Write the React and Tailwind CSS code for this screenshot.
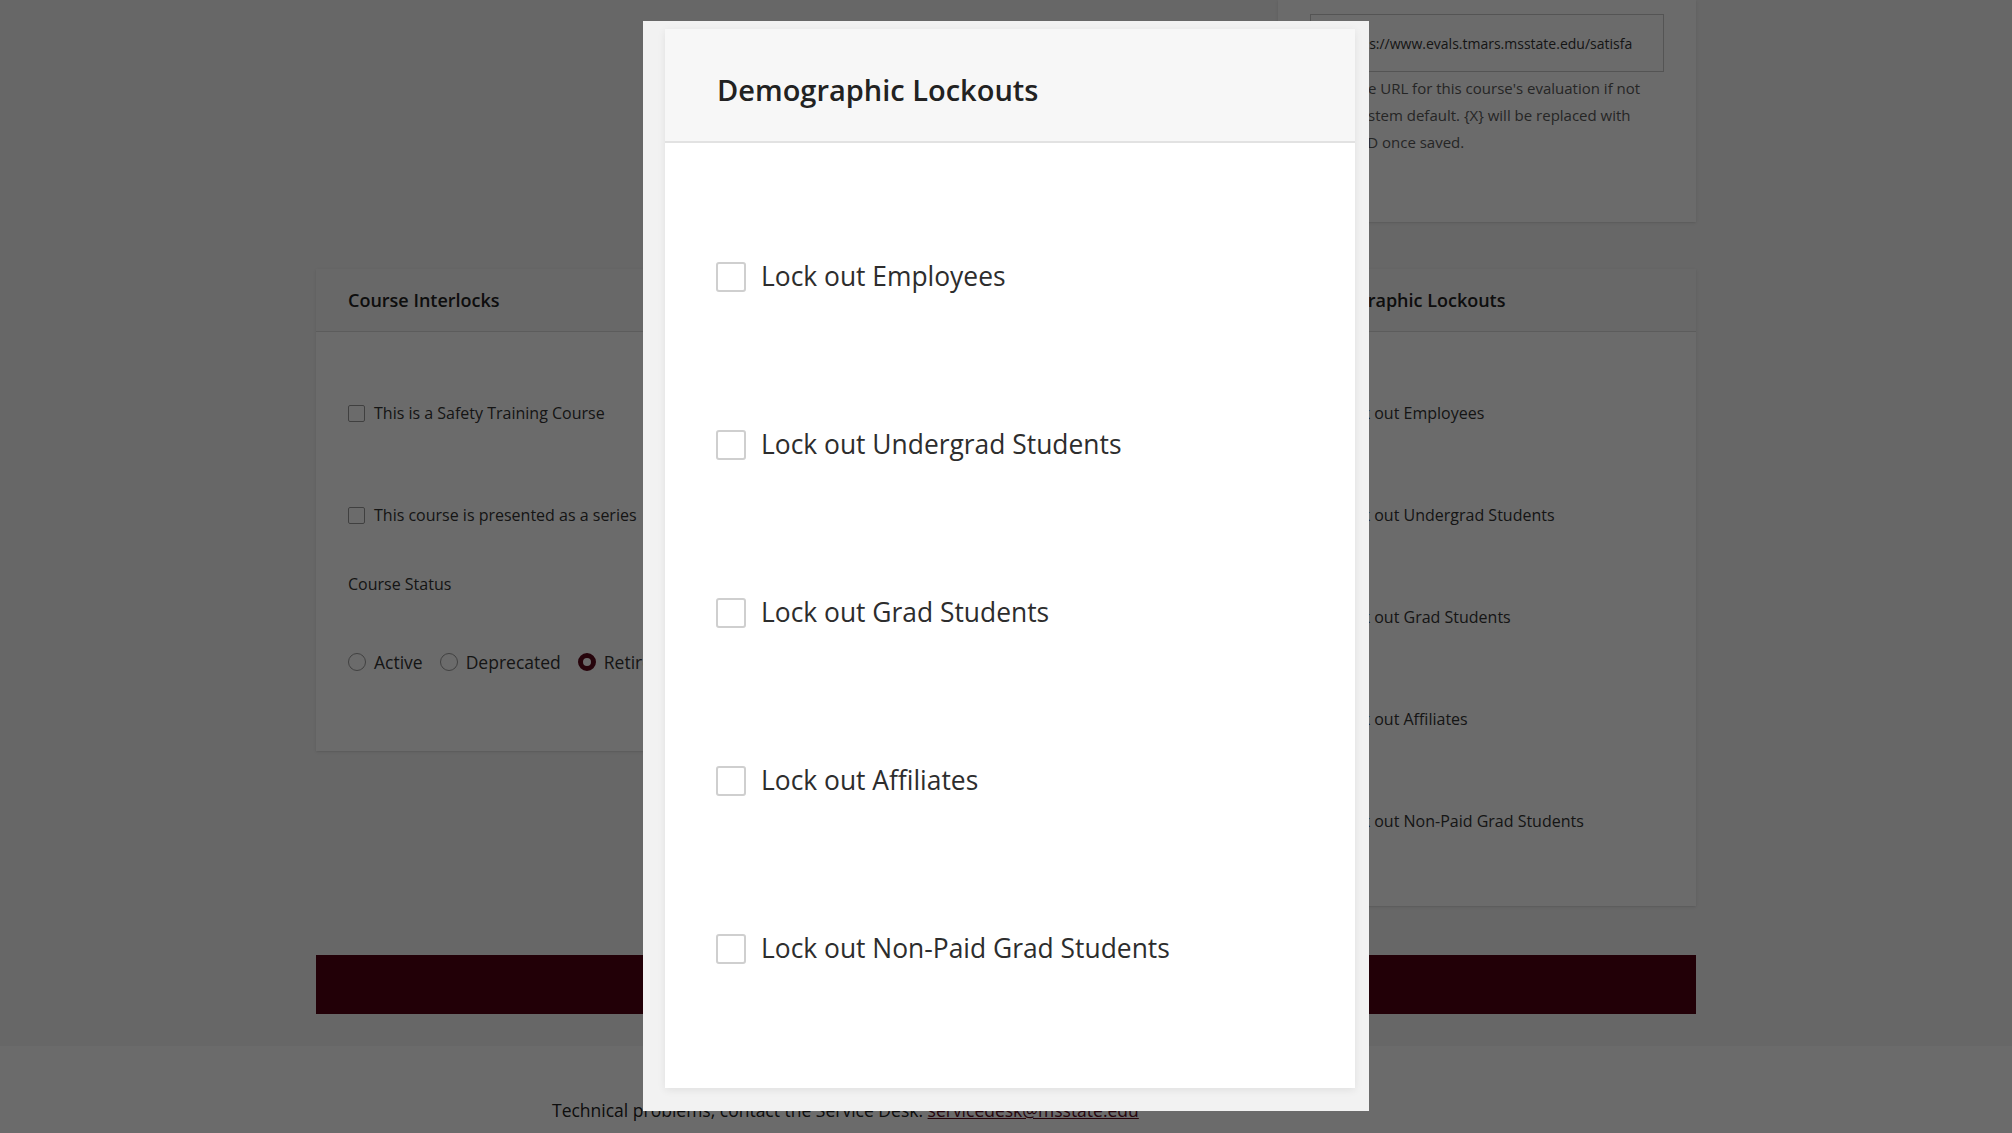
import React from 'react';

const lockouts = [
  'Lock out Employees',
  'Lock out Undergrad Students',
  'Lock out Grad Students',
  'Lock out Affiliates',
  'Lock out Non-Paid Grad Students',
];

function Checkbox({ big }) {
  if (big) {
    return <span className="w-[30px] h-[30px] shrink-0 border-2 border-[#cfcfcf] rounded-[3px] bg-white" />;
  }
  return <span className="w-[17px] h-[17px] shrink-0 border border-[#9a9a9a] rounded-[2px] bg-white" />;
}

function Radio({ checked, label }) {
  return (
    <label className="flex items-center gap-[8px] mr-[17px]">
      {checked ? (
        <span className="w-[18px] h-[18px] rounded-full border-[5px] border-[#5c0a1c] bg-white" />
      ) : (
        <span className="w-[18px] h-[18px] rounded-full border border-[#9a9a9a] bg-white" />
      )}
      <span>{label}</span>
    </label>
  );
}

function CardHeader({ children, tight }) {
  return (
    <div
      className={
        'h-[63px] bg-[#f7f7f7] border-b border-[#dcdcdc] pr-8 flex items-center text-[18px] font-semibold text-[#222] ' +
        (tight ? 'pl-[28px]' : 'pl-8')
      }
    >
      {children}
    </div>
  );
}

function CheckRow({ label }) {
  return (
    <div className="h-[102px] flex items-center gap-[9px] text-[16px] text-[#333]">
      <Checkbox />
      <span className="whitespace-nowrap">{label}</span>
    </div>
  );
}

export default function App() {
  return (
    <div className="relative h-[1133px] overflow-hidden bg-[#f5f5f5] font-['Open_Sans',sans-serif] text-[#222]">
      <main className="mx-auto w-[1380px]">
        <div className="grid grid-cols-[930px_418px] gap-x-[32px]">
          <div />
          <div className="h-[222px] bg-white shadow-sm px-8 pt-[14px]">
            <div className="h-[58px] border border-[#c8c8c8] flex items-center pl-[31px] pr-[31px] text-[14px] text-[#333]">
              <span className="block w-full overflow-hidden whitespace-nowrap">
                https://www.evals.tmars.msstate.edu/satisfaction.php?course=&#123;X&#125;
              </span>
            </div>
            <p className="mt-[3px] pl-[2px] text-[15px] leading-[27px] text-[#5a5a5a] whitespace-nowrap">
              Enter the URL for this course's evaluation if not
              <br />
              using system default. &#123;X&#125; will be replaced with
              <br />
              course ID once saved.
            </p>
          </div>
        </div>

        <div className="mt-[47px] grid grid-cols-[930px_418px] gap-x-[32px] items-start">
          <section className="bg-white shadow-sm">
            <CardHeader>Course Interlocks</CardHeader>
            <div className="px-8 pt-[30px] pb-[77px]">
              <CheckRow label="This is a Safety Training Course" />
              <CheckRow label="This course is presented as a series" />
              <div className="mt-[8px] text-[16px] leading-[20px] text-[#333]">Course Status</div>
              <div className="mt-[56px] h-[24px] flex items-center text-[17.5px] text-[#333]">
                <Radio label="Active" />
                <Radio label="Deprecated" />
                <Radio label="Retired" checked />
              </div>
            </div>
          </section>

          <section className="bg-white shadow-sm">
            <CardHeader tight>Demographic Lockouts</CardHeader>
            <div className="px-8 pt-[30px] pb-[34px]">
              {lockouts.map((l) => (
                <CheckRow key={l} label={l} />
              ))}
            </div>
          </section>
        </div>

        <button className="mt-[49px] w-full h-[59px] bg-[#520012] text-white text-[18px] font-semibold">
          Save Course
        </button>
      </main>

      <footer className="mt-[32px] h-[120px] bg-white pt-[52px] pl-[552px] text-[17.5px] leading-[24px] text-[#222]">
        Technical problems, contact the Service Desk:{' '}
        <a href="#" className="underline text-[#5c0a1c]">servicedesk@msstate.edu</a>
      </footer>

      <div className="absolute inset-0 bg-black/[0.58]" />

      <div className="absolute inset-0 flex justify-center pt-[21px]">
        <div className="w-[726px] h-[1090px] bg-[#f2f2f2] pl-[22px] pr-[14px] pt-[8px] pb-[23px]">
          <div className="h-full bg-white shadow-[0_2px_8px_rgba(0,0,0,0.08)] flex flex-col">
            <div className="h-[114px] shrink-0 bg-[#f7f7f7] border-b-2 border-[#e2e2e2] pl-[52px] pt-[10px] flex items-center text-[29px] font-semibold text-[#222]">
              Demographic Lockouts
            </div>
            <div className="pt-[50px] pl-[51px]">
              {lockouts.map((l) => (
                <div key={l} className="h-[168px] flex items-center gap-[15px] text-[26.4px] text-[#2d2d2d]">
                  <Checkbox big />
                  <span className="whitespace-nowrap">{l}</span>
                </div>
              ))}
            </div>
          </div>
        </div>
      </div>
    </div>
  );
}
